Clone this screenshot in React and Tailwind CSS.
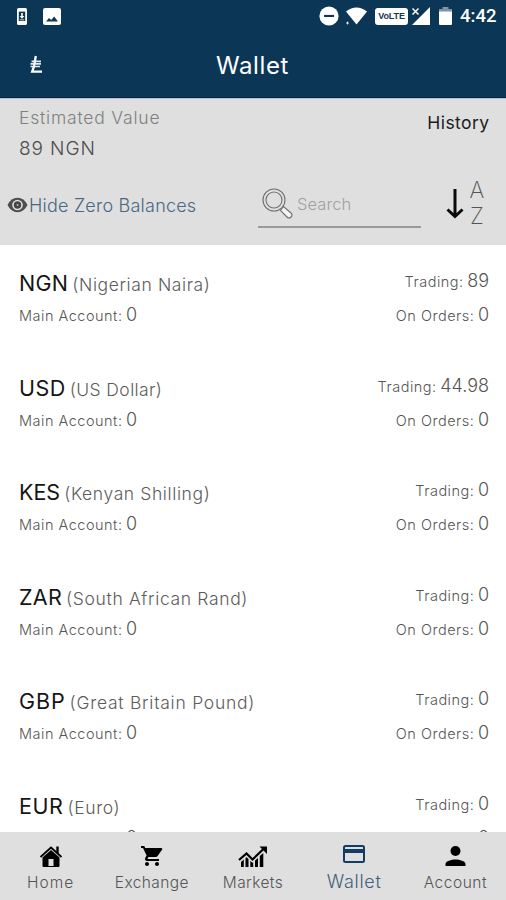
import React from 'react';

const currencies = [
  { code: 'NGN', name: 'Nigerian Naira', trading: '89', codeTracking: 'tracking-[0.3px]', tracking: 'tracking-[0.6px]' },
  { code: 'USD', name: 'US Dollar', trading: '44.98', codeTracking: 'tracking-[0.5px]', tracking: 'tracking-[0.4px]' },
  { code: 'KES', name: 'Kenyan Shilling', trading: '0', codeTracking: 'tracking-normal', tracking: 'tracking-[0.6px]' },
  { code: 'ZAR', name: 'South African Rand', trading: '0', codeTracking: 'tracking-[0.3px]', tracking: 'tracking-[0.65px]' },
  { code: 'GBP', name: 'Great Britain Pound', trading: '0', codeTracking: 'tracking-[0.9px]', tracking: 'tracking-[0.75px]' },
  { code: 'EUR', name: 'Euro', trading: '0', codeTracking: 'tracking-[0.6px]', tracking: 'tracking-[0.6px]' },
];

function StatusBar() {
  return (
    <div className="flex h-8 shrink-0 items-center pl-[17px] pr-[10px] text-white">
      <svg width="10" height="17" viewBox="0 0 10 17">
        <rect width="10" height="17" rx="1.6" fill="#fff" />
        <rect x="1.8" y="3.6" width="6.4" height="9.4" fill="#0c3656" />
        <path d="M4.200 5h1.600v3h1.600L5 10.800 2.600 8h1.600zM2.800 11.400h4.400v.8H2.800z" fill="#fff" />
      </svg>
      <svg className="ml-4" width="18" height="17" viewBox="0 0 18 17">
        <rect width="18" height="17" rx="2" fill="#fff" />
        <path d="M3 13.500 6 10l2.200 2 3-3.500 3.800 5z" fill="#0c3656" />
      </svg>
      <svg className="ml-auto" width="20" height="20" viewBox="0 0 20 20">
        <circle cx="10" cy="10" r="9.600" fill="#fff" />
        <rect x="5" y="8.900" width="10" height="2.100" fill="#0c3656" />
      </svg>
      <svg className="ml-[6px]" width="23" height="18" viewBox="0 0 23 18">
        <path d="M1 4.500Q11.500-3.500 22 4.500L11.500 17.500z" fill="#fff" />
        <path d="M2.500 14.500v3M1 16h3" stroke="#fff" strokeWidth="0.8" />
      </svg>
      <div className="ml-[7px] flex h-[17px] w-[33px] items-center justify-center rounded-[3px] bg-white font-['Liberation_Sans'] text-[9px] font-bold leading-none tracking-[-0.1px] text-[#16364f]">
        VoLTE
      </div>
      <svg className="ml-[3px]" width="20" height="20" viewBox="0 0 20 20">
        <path d="M19 1v18H1z" fill="#fff" />
        <path d="M1.500 2.500l6 6M7.500 2.500l-6 6" stroke="#0c3656" strokeWidth="3.500" />
        <path d="M1.500 2.500l6 6M7.500 2.500l-6 6" stroke="#fff" strokeWidth="1.500" />
      </svg>
      <svg className="ml-[8px]" width="13" height="18" viewBox="0 0 13 18">
        <path d="M3.500 0h6v2H13v3H0V2h3.500z" fill="#7d93a5" />
        <path d="M0 4.500h13V17a1 1 0 0 1-1 1H1a1 1 0 0 1-1-1z" fill="#fff" />
      </svg>
      <span className="ml-2 w-[36px] whitespace-nowrap font-[Roboto] text-[18.500px] font-medium leading-none">4:42</span>
    </div>
  );
}

function Header() {
  return (
    <header className="relative flex h-[66px] shrink-0 items-center justify-center">
      <svg className="absolute left-[29px] top-[23px]" width="14" height="19" viewBox="0 0 14 19">
        <path d="M6.800 1 5 11.500 3.200 16.600H13" fill="none" stroke="#fff" strokeWidth="2.300" />
        <path d="M2.500 6.300h9.500M1.500 8.900h10.500M1.500 11.500h9.500" stroke="#e6ecf1" strokeWidth="1.700" />
      </svg>
      <h1 className="mr-px mt-px text-[24px] font-normal leading-none tracking-[0.6px] text-white">Wallet</h1>
    </header>
  );
}

function Summary() {
  return (
    <section className="h-[147px] shrink-0 border-t border-[#b9c0d2] bg-[#dfdfdf]">
      <div className="flex justify-between pl-[19px] pr-[17px]">
        <div>
          <div className="mt-[8px] text-[17.500px] leading-[22px] tracking-[0.8px] text-[#808080]">Estimated Value</div>
          <div className="mt-[8px] text-[19px] leading-[24px] tracking-[0.9px] text-[#4c4c4c]">89 NGN</div>
        </div>
        <div className="-mr-[0.400px] mt-[13px] text-[17.500px] font-normal leading-[22px] tracking-[0.4px] text-[#1d1d1d]">History</div>
      </div>

      <div className="mt-[15px] flex h-[52px] items-start">
        <div className="ml-[7px] mt-[18px] flex h-[22px] w-[191px] items-center">
          <svg width="21" height="16" viewBox="0 0 21 16">
            <path d="M.5 8Q4 .8 10.500.8T20.500 8Q17 15.200 10.500 15.200T.5 8z" fill="#4d4d4d" />
            <circle cx="10.500" cy="8" r="5.300" fill="#dfdfdf" />
            <circle cx="10.500" cy="8" r="3.700" fill="#454545" />
            <circle cx="10.500" cy="8" r="1" fill="#b5b5b5" />
          </svg>
          <span className="ml-px mt-px whitespace-nowrap text-[18px] leading-[22px] tracking-[0.220px] text-[#496780]">Hide Zero Balances</span>
        </div>
        <div className="ml-[60px] flex h-[52px] w-[163px] items-center border-b-2 border-[#999]">
          <svg className="ml-1 mt-1" width="32" height="32" viewBox="0 0 32 32" fill="none" stroke="#707070" strokeWidth="1.100">
            <circle cx="12" cy="13" r="11" />
            <circle cx="12" cy="13" r="8" />
            <path d="M18.500 23.500 21.500 19.500 29 26Q31 28 29 30T25 30z" fill="#f3f3f3" />
          </svg>
          <span className="ml-[3px] mt-[7px] text-[16.500px] leading-none tracking-[0.1px] text-[#a0a0a0]">Search</span>
        </div>
        <svg className="ml-[25px] mt-[12px]" width="18" height="32" viewBox="0 0 18 32" fill="none" stroke="#0a0a0a" strokeWidth="3">
          <path d="M9 1v27M1.500 21.500 9 28.500l7.500-7" />
        </svg>
        <div className="ml-[4px] mt-px w-[18px] text-center text-[22.500px] font-extralight leading-[26px] text-[#555]">
          <div>A</div>
          <div>Z</div>
        </div>
      </div>
    </section>
  );
}

function CurrencyRow({ currency }) {
  return (
    <li className="h-[104.500px] pl-[19px] pr-[17px] pt-[22px]">
      <div className="flex items-start justify-between">
        <div className="whitespace-nowrap leading-[32px]">
          <span className={`text-[21.500px] font-normal text-[#151515] ${currency.codeTracking}`}>{currency.code}</span>
          <span className={`ml-[4px] text-[17.500px] text-[#5c5c5c] ${currency.tracking}`}>({currency.name})</span>
        </div>
        <Amount label="Trading:" value={currency.trading} />
      </div>
      <div className="flex items-start justify-between">
        <Amount label="Main Account:" value="0" />
        <Amount label="On Orders:" value="0" />
      </div>
    </li>
  );
}

function Amount({ label, value }) {
  return (
    <div className="whitespace-nowrap leading-[28px] text-[#555]">
      <span className="text-[14.500px] tracking-[0.500px]">{label}</span>
      <span className="ml-[3.500px] text-[18px]">{value}</span>
    </div>
  );
}

const tabs = [
  {
    label: 'Home',
    tracking: 'tracking-[1px]',
    icon: (
      <svg width="24" height="24" viewBox="0 0 24 24">
        <path d="M3.500 13.500 12 6l8.500 7.500V22a1 1 0 0 1-1 1h-15a1 1 0 0 1-1-1z" />
        <path d="M1.500 13 12 3.500 22.500 13" fill="none" stroke="currentColor" strokeWidth="1.800" />
        <path d="M17.300 2.500h2.400v8l-2.400-2.200z" />
        <path d="M9.500 15h5v7h-5z" fill="#dfdfdf" />
      </svg>
    ),
  },
  {
    label: 'Exchange',
    tracking: 'tracking-[0.4px]',
    icon: (
      <svg width="24" height="24" viewBox="0 0 24 24">
        <path d="M7 18c-1.100 0-2 .9-2 2s.9 2 2 2 2-.9 2-2-.9-2-2-2zM1 2v2h2l3.600 7.600L5.200 14c-.7 1.300.2 3 1.800 3h12v-2H7.400l1.100-2h7.400c.8 0 1.400-.4 1.700-1L22.200 5.500C22.500 4.800 22 4 21.300 4H5.200l-.9-2H1zm16 16c-1.100 0-2 .9-2 2s.9 2 2 2 2-.9 2-2-.9-2-2-2z" />
      </svg>
    ),
  },
  {
    label: 'Markets',
    tracking: 'tracking-[0.4px]',
    icon: (
      <svg width="30" height="24" viewBox="0 0 30 24">
        <path d="M1 16 8.500 9.500l6 6L26 4.500" fill="none" stroke="currentColor" strokeWidth="2.200" />
        <path d="M21.500 2.500H29V10z" />
        <path d="M3 18l2.800-2.500V23H3zM7.500 14l1-.8 2 1.800V23h-3zM12.300 17l2.200 1.800.7-.6V23h-2.900zM17 16.500 20 14v9h-3zM21.800 12l3.500-3v14h-3.500z" />
      </svg>
    ),
  },
  {
    label: 'Wallet',
    active: true,
    icon: (
      <svg width="24" height="20" viewBox="0 0 24 20">
        <rect x="2" y="2" width="20" height="16" rx="1.500" fill="none" stroke="currentColor" strokeWidth="2" />
        <path d="M2 5h20v4H2z" />
      </svg>
    ),
  },
  {
    label: 'Account',
    tracking: 'tracking-[0.5px]',
    icon: (
      <svg width="24" height="24" viewBox="0 0 24 24">
        <circle cx="12.500" cy="7" r="5" />
        <path d="M2.500 22v-2c0-3 6-4.500 10-4.500s10 1.500 10 4.500v2z" />
      </svg>
    ),
  },
];

function TabBar() {
  return (
    <nav className="grid h-[68px] shrink-0 grid-cols-5 bg-[#dfdfdf]">
      {tabs.map(tab => (
        <div key={tab.label} className={`flex flex-col items-center ${tab.active ? 'text-[#123c63]' : 'text-black'}`}>
          <div className="mt-[12px] h-6 fill-current">{tab.icon}</div>
          {tab.active ? (
            <span className="mt-[3px] text-[18px] leading-[22px] tracking-[0.7px] text-[#3f607d]">{tab.label}</span>
          ) : (
            <span className={`mt-[4px] text-[15.500px] leading-[22px] text-[#555] ${tab.tracking}`}>{tab.label}</span>
          )}
        </div>
      ))}
    </nav>
  );
}

export default function App() {
  return (
    <div className="flex h-[900px] w-[506px] flex-col overflow-hidden bg-white font-[Inter,sans-serif] font-light">
      <div className="flex h-[98px] shrink-0 flex-col border-b border-[#0b1f45] bg-[#0c3656]">
        <StatusBar />
        <Header />
      </div>
      <Summary />
      <ul className="min-h-0 flex-1 overflow-hidden">
        {currencies.map(currency => (
          <CurrencyRow key={currency.code} currency={currency} />
        ))}
      </ul>
      <TabBar />
    </div>
  );
}
